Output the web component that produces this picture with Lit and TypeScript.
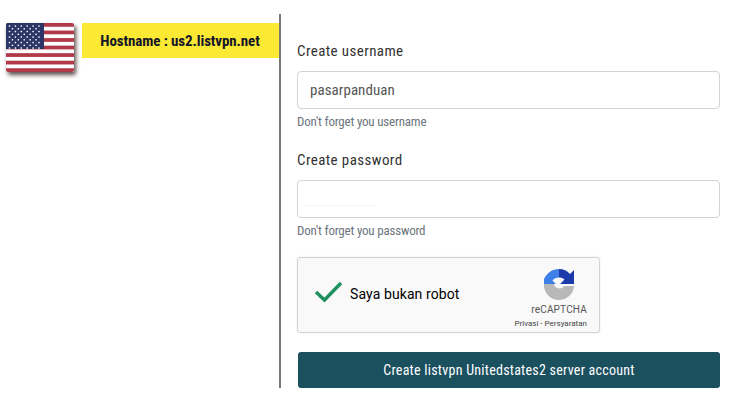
import { LitElement, html, css, svg } from "lit";
import { customElement } from "lit/decorators.js";

const stripes = [0, 1, 2, 3, 4, 5, 6];
const stars: [number, number][] = [];
for (let r = 0; r < 9; r++) {
  const n = r % 2 === 0 ? 6 : 5;
  for (let c = 0; c < n; c++) {
    stars.push([3.5 + c * 5.9 + (r % 2 ? 2.95 : 0), 3 + r * 2.75]);
  }
}

@customElement("app-root")
export class AppRoot extends LitElement {
  static styles = css`
    :host {
      display: block;
      width: 730px;
      height: 404px;
      background: #fff;
      font-family: "Roboto Condensed", "DejaVu Sans Condensed", "Liberation Sans", sans-serif;
      overflow: hidden;
    }
    .page {
      display: grid;
      grid-template-columns: 279px 2px 1fr;
      margin-top: 14px;
      height: 374px;
    }
    .left {
      display: flex;
      align-items: flex-start;
      gap: 8px;
      padding: 9px 0 0 6px;
    }
    .flag {
      width: 68px;
      height: 49px;
      display: block;
      border-radius: 2px;
      box-shadow: 2px 3px 4px rgba(40, 20, 20, 0.75);
      flex: none;
    }
    .banner {
      flex: 1;
      height: 35px;
      background: #fbe933;
      color: #15152a;
      font-size: 15px;
      font-weight: 700;
      letter-spacing: -0.1px;
      display: flex;
      align-items: center;
      justify-content: center;
      padding-right: 1px;
    }
    .rule {
      background: #777;
    }
    .form {
      padding: 29px 10px 0 16px;
      display: flex;
      flex-direction: column;
    }
    label {
      display: block;
      font-size: 15px;
      line-height: 16px;
      height: 16px;
      margin-bottom: 12px;
      color: #333;
      letter-spacing: 0.4px;
    }
    .input {
      height: 38px;
      box-sizing: border-box;
      border: 1px solid #ced4da;
      border-radius: 4px;
      padding: 0 12px;
      display: flex;
      align-items: center;
      font-size: 15px;
      letter-spacing: 0.05px;
      color: #555;
      background: #fff;
    }
    .hint {
      font-size: 13px;
      line-height: 14px;
      margin-top: 6px;
      color: #6c757d;
      height: 24px;
      letter-spacing: -0.2px;
    }
    .dots {
      display: block;
      width: 70px;
      height: 8px;
      margin: 4px 0 0 -5px;
      border-bottom: 1px dotted #e8e8e8;
    }
    .group2 {
      margin-top: 13px;
    }
    .captcha {
      width: 303px;
      height: 76px;
      box-sizing: border-box;
      margin-top: 9px;
      background: #f9f9f9;
      border: 1px solid #d3d3d3;
      border-radius: 3px;
      box-shadow: 0 0 3px rgba(0, 0, 0, 0.08);
      display: flex;
      align-items: center;
      font-family: Roboto, "Liberation Sans", sans-serif;
      color: #000;
    }
    .check {
      width: 30px;
      height: 24px;
      margin: -6px 0 0 16px;
      flex: none;
    }
    .robot {
      margin: -2px 0 0 6px;
      font-size: 14px;
      flex: 1;
      letter-spacing: 0.1px;
    }
    .brand {
      flex: none;
      align-self: stretch;
      display: flex;
      flex-direction: column;
      align-items: flex-end;
      padding: 10px 12px 0 0;
      box-sizing: border-box;
    }
    .logo {
      width: 32px;
      height: 32px;
      display: block;
      margin-right: 12px;
    }
    .re {
      font-size: 10px;
      line-height: 12px;
      margin-top: 4px;
      color: #555;
      letter-spacing: 0.2px;
    }
    .terms {
      font-size: 8px;
      line-height: 10px;
      margin-top: 3px;
      color: #444;
    }
    button {
      margin: 19px 0 0 1px;
      height: 36px;
      border: none;
      border-radius: 3px;
      background: #1b505f;
      color: #fff;
      font: inherit;
      font-size: 14px;
      letter-spacing: 0.25px;
      padding: 0;
    }
  `;

  flag() {
    return html`<svg class="flag" viewBox="0 0 68 49" preserveAspectRatio="none">
      <rect width="68" height="49" fill="#fff" />
      ${stripes.map((i) => svg`<rect y=${i * 7.54} width="68" height="3.77" fill="#b23a48" />`)}
      <rect width="38" height="26" fill="#2b3566" />
      ${stars.map(([x, y]) => svg`<circle cx=${x} cy=${y} r="0.85" fill="#fff" />`)}
    </svg>`;
  }

  render() {
    return html`<div class="page">
      <div class="left">
        ${this.flag()}
        <div class="banner">Hostname : us2.listvpn.net</div>
      </div>
      <div class="rule"></div>
      <div class="form">
        <label>Create username</label>
        <div class="input">pasarpanduan</div>
        <div class="hint">Don't forget you username</div>
        <div class="group2">
          <label>Create password</label>
          <div class="input"><span class="dots"></span></div>
          <div class="hint">Don't forget you password</div>
        </div>
        <div class="captcha">
          <svg class="check" viewBox="0 0 30 24">
            <path d="M2 12 L10.5 20 L27 3" fill="none" stroke="#1f9160" stroke-width="3.4" />
          </svg>
          <div class="robot">Saya bukan robot</div>
          <div class="brand">
            <svg class="logo" viewBox="0 0 32 32">
              <path d="M1 16 L11 16 A5.5 5.5 0 0 0 21 18 L31 18 A15 15 0 0 1 1 16 Z" fill="#b8b8b8" />
              <path d="M16 1 C9 1 4 5 1 11 L1 16 L13 16 L9.5 12.5 C11 10.5 13 9.5 16 9.5 Z" fill="#3f7fe8" />
              <path d="M16 1 A15 15 0 0 1 27 6 L31 2 L31 16 L17 16 L21.5 11.5 A7 7 0 0 0 16 9.5 Z" fill="#1c3aa9" />
            </svg>
            <div class="re">reCAPTCHA</div>
            <div class="terms">Privasi - Persyaratan</div>
          </div>
        </div>
        <button>Create listvpn Unitedstates2 server account</button>
      </div>
    </div>`;
  }
}
